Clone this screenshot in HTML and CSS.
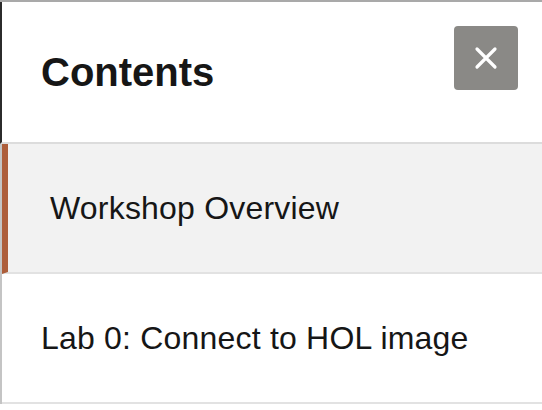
FILE: index.html
```html
<!DOCTYPE html>
<html lang="en">
<head>
<meta charset="utf-8">
<title>Contents</title>
<link rel="stylesheet" href="styles.css">
</head>
<body>
<div class="panel">
  <header class="panel-header">
    <h1 class="title">Contents</h1>
    <button class="close" aria-label="Close">
      <svg width="24" height="24" viewBox="0 0 24 24" aria-hidden="true">
        <path d="M3 3 L21 21 M21 3 L3 21" stroke="#fff" stroke-width="3.2" stroke-linecap="round" fill="none"/>
      </svg>
    </button>
  </header>
  <ul class="toc">
    <li class="toc-item active">Workshop Overview</li>
    <li class="toc-item">Lab 0: Connect to HOL image</li>
  </ul>
</div>
</body>
</html>
```
FILE: styles.css
```css
html, body {
  margin: 0;
  padding: 0;
  background: #fff;
}
body {
  font-family: "Liberation Sans", Arial, Helvetica, sans-serif;
  color: #161616;
  width: 542px;
  height: 410px;
  overflow: hidden;
}
.panel {
  border-top: 2px solid #a9a9a9;
}
.panel-header {
  display: flex;
  justify-content: space-between;
  align-items: center;
  box-sizing: border-box;
  border-left: 2px solid #2b2b2b;
  border-bottom: 2px solid #dcdcdc;
  height: 142px;
  padding: 0 24px 0 39px;
}
.title {
  margin: 0;
  font-size: 40px;
  font-weight: bold;
}
.close {
  align-self: flex-start;
  margin-top: 24px;
  width: 64px;
  height: 64px;
  border: none;
  border-radius: 4px;
  background: #8a8986;
  display: flex;
  align-items: center;
  justify-content: center;
  padding: 0;
}
.toc {
  list-style: none;
  margin: 0;
  padding: 0;
  border-left: 2px solid #c4c4c4;
}
.toc-item {
  height: 130px;
  box-sizing: border-box;
  border-bottom: 2px solid #e2e2e2;
  display: flex;
  align-items: center;
  padding-left: 39px;
  font-size: 32px;
  letter-spacing: 0.2px;
}
.toc-item.active {
  background: #f2f2f2;
  border-left: 6px solid #ad5e3b;
  padding-left: 42px;
}
```
